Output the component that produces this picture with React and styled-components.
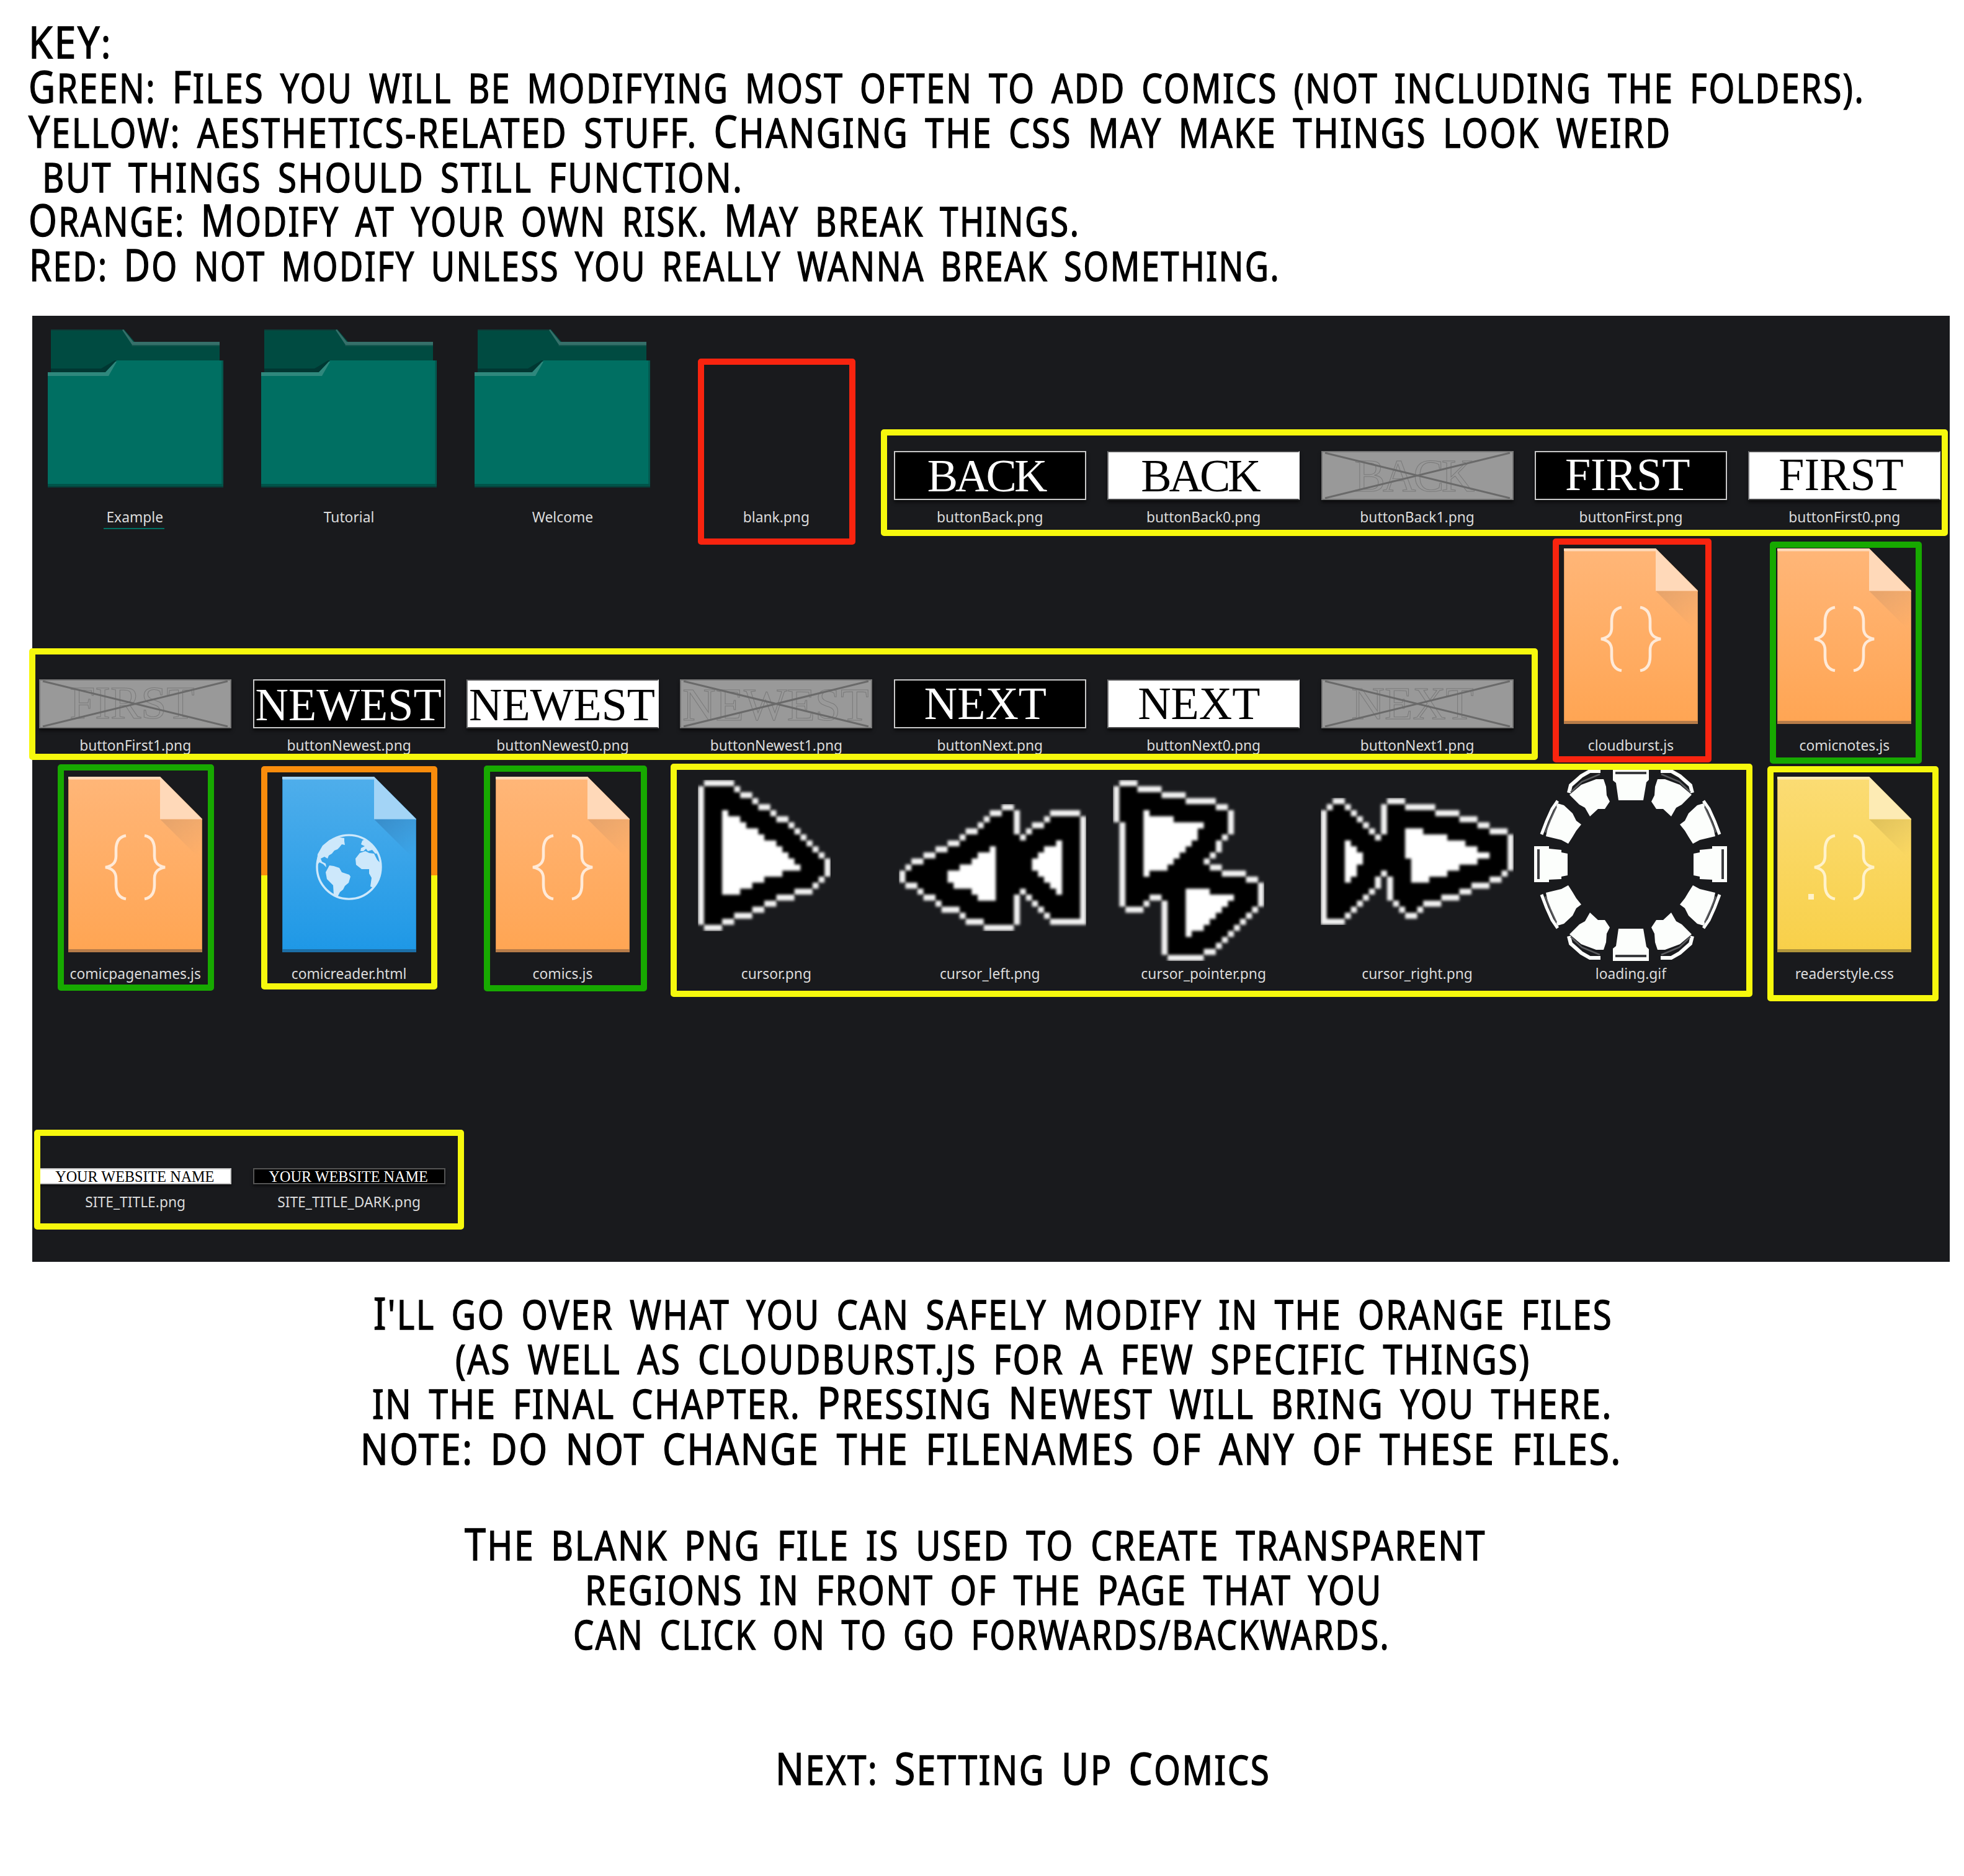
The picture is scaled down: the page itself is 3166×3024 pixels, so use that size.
import React, { useLayoutEffect, useRef, useState } from "react";
import styled, { createGlobalStyle, css } from "styled-components";

const GlobalStyle = createGlobalStyle`
  *, *::before, *::after { box-sizing: border-box; }
  body { margin: 0; background: #fff; }
`;

const Page = styled.main`
  width: 3166px;
  height: 3024px;
  overflow: hidden;
  background: #fff;
  display: flex;
  flex-direction: column;
  color: #000;
  font-family: "Noto Sans", sans-serif;
`;

/* ---------- lettering ---------- */

const Notes = styled.section`
  display: flex;
  flex-direction: column;
  padding-top: ${(p) => p.$top}px;
`;

const NoteLine = styled.div`
  height: 71.8px;
  padding-left: ${(p) => p.$x}px;
  white-space: pre;
  line-height: 71.8px;
  font-size: ${(p) => p.$size || 65}px;
`;

const Lettering = styled.span`
  display: inline-block;
  transform-origin: left center;
  text-transform: uppercase;
  letter-spacing: 3px;
  word-spacing: 11px;
  -webkit-text-stroke: 1.5px #000;
  stroke-linejoin: round;
`;

const Capital = styled.span`
  font-size: 72px;
  line-height: 0;
`;

function Line({ x, end, size, children }) {
  const ref = useRef(null);
  const [scale, setScale] = useState(1);
  const width = end - x;
  useLayoutEffect(() => {
    setScale((width + 8) / ref.current.offsetWidth);
  }, [width]);
  const runs = size ? [children] : children.split(/([A-Z]+)/);
  return (
    <NoteLine $x={x - 4} $size={size}>
      <Lettering ref={ref} style={{ transform: `scaleX(${scale})` }}>
        {runs.map((run, i) => (i % 2 ? <Capital key={i}>{run}</Capital> : run))}
      </Lettering>
    </NoteLine>
  );
}

/* ---------- file browser ---------- */

const BrowserWrap = styled.section`
  position: relative;
  margin: 44px 23px 0 52px;
  height: 1525px;
`;

const Browser = styled.div`
  height: 100%;
  overflow: hidden;
  background: #191a1d;
`;

const FileGrid = styled.div`
  display: grid;
  grid-template-columns: repeat(9, 344.4px);
  grid-auto-rows: 368px;
  margin: -4px 0 0 -6px;
`;

const FileCell = styled.figure`
  margin: 0;
  display: flex;
  flex-direction: column;
  align-items: center;
`;

const Art = styled.div`
  height: 308px;
  flex: none;
  display: flex;
  align-items: flex-end;
  padding-bottom: ${(p) => p.$gap}px;
`;

const FileName = styled.figcaption`
  height: 40px;
  line-height: 42px;
  font-size: 22.8px;
  color: #dcdcdc;
  white-space: nowrap;
  ${(p) =>
    p.$selected &&
    css`
      padding: 0 2px 0 4px;
      margin-left: -4px;
      box-shadow: inset 0 -2px 0 #006f62;
    `}
`;

const tones = {
  dark: css`
    background: #000;
    color: #fff;
    border-color: #c9c9c9;
  `,
  light: css`
    background: #fff;
    color: #000;
    border-color: #4a4a4c #f0f0f0 #4a4a4c #77787a;
  `,
  muted: css`
    background: #999;
    color: #999;
    border-color: #757575;
    -webkit-text-stroke: 1.1px #7c7c7c;
  `,
};

const ButtonImage = styled.div`
  position: relative;
  width: 310px;
  height: 79px;
  padding-left: ${(p) => p.$indent}px;
  border: 2px solid;
  box-shadow: 0 4px 5px rgba(0, 0, 0, 0.55);
  font: 74px/${(p) => p.$leading}px "Liberation Serif", serif;
  letter-spacing: ${(p) => p.$tracking || 0}px;
  white-space: nowrap;
  ${(p) => tones[p.$tone]}
`;

const Cross = styled.svg`
  position: absolute;
  inset: 0;
  width: 100%;
  height: 100%;
`;

const TitleImage = styled.div`
  width: 310px;
  height: 26px;
  padding-left: 24px;
  border: 2px solid;
  box-shadow: 0 3px 4px rgba(0, 0, 0, 0.5);
  font: 24.2px/24px "Liberation Serif", serif;
  white-space: nowrap;
  ${(p) => tones[p.$tone]}
  border-color: ${(p) => (p.$tone === "dark" ? "#555" : "#c4c4c4")};
`;

const Picture = styled.svg`
  display: block;
  width: ${(p) => p.$w}px;
  height: ${(p) => p.$h}px;
  overflow: hidden;
`;

const Highlight = styled.div`
  position: absolute;
  left: ${(p) => p.$box[0] - 52}px;
  top: ${(p) => p.$box[1] - 509}px;
  width: ${(p) => p.$box[2] - p.$box[0]}px;
  height: ${(p) => p.$box[3] - p.$box[1]}px;
  border: 10px solid ${(p) => p.$color};
  border-radius: 5px;
`;

const SplitHighlight = styled(Highlight)`
  border-top-color: #f98c0c;
  border-left-width: 0;
  border-right-width: 0;
  &::before,
  &::after {
    content: "";
    position: absolute;
    top: -6px;
    bottom: -6px;
    width: 10px;
    background: linear-gradient(#f98c0c 172px, ${(p) => p.$color} 172px);
  }
  &::before { left: 0; }
  &::after { right: 0; }
`;

/* ---------- drawings ---------- */

function Folder() {
  return (
    <Picture $w={283} $h={255} viewBox="0 0 283 255">
      <path d="M5 0H123L140 20H277V80H5Z" fill="#004b41" />
      <path d="M5 0H123L124 2H5Z" fill="#0b3c37" />
      <path d="M122 0L138 20H277V25H136L120 1Z" fill="#35706a" />
      <path d="M136 25H277V27H135Z" fill="#14564e" />
      <path d="M5 63H86L108 50H116V70H5Z" fill="#003732" />
      <path d="M0 69H93L111 50H283V255H0Z" fill="#006f62" />
      <path d="M0 69H93L109 52H111L98 75H0Z" fill="#2f887d" />
      <path d="M0 249H283V253H0Z" fill="#005449" />
      <path d="M0 253H283V255H0Z" fill="#093b37" />
      <path d="M281.500 50V253" stroke="#055349" strokeWidth="2" />
    </Picture>
  );
}

const paper = {
  orange: { top: "#ffb678", bottom: "#ffa553", fold: "#ffd9b9", base: "#b77c49", mark: "#ffead8", shade: "#e0a06a" },
  blue: { top: "#4faeeb", bottom: "#1e98e6", fold: "#a3d4f6", base: "#1c6fa7", mark: "#cde8fb", shade: "#3586c2" },
  yellow: { top: "#fbdc74", bottom: "#f8d049", fold: "#fdebb4", base: "#b2963b", mark: "#fff2cb", shade: "#d9bb56" },
};

function Braces({ color, dot }) {
  return (
    <g fill="none" stroke={color} strokeWidth="4.6">
      <path d="M93 95C81 97 77 106 77 118V128C77 139 71 144 60 146C71 148 77 153 77 164V174C77 186 81 195 93 197" />
      <path d="M123 95C135 97 139 106 139 118V128C139 139 145 144 156 146C145 148 139 153 139 164V174C139 186 135 195 123 197" />
      {dot && <rect x="50" y="189" width="9" height="9" fill={color} stroke="none" />}
    </g>
  );
}

function Globe({ color }) {
  return (
    <g fill={color}>
      <circle cx="107.500" cy="145.600" r="51.500" fill="none" stroke={color} strokeWidth="3.400" />
      <path d="M76 102L88 97L100 99V104L101 110L96 109L92 114L89 117L84 119L80 124L75 127L73 132L68 129L62 132L64 137L70 140L71 146L66 141L60 138L56 143L57 125L65 111Z" />
      <path d="M76 143L83 144L92 147L96 154L108 158L110 161L107 171L101 176L98 182L93 186L89 194L83 191L82 175L72 165L70 154Z" />
      <path d="M125 123L134 120L140 123L148 124L153 134L159 140L160 150L156 167L147 179L142 177L144 163L140 156L140 149L128 149L119 142L118 132Z" />
      <path d="M126 120L127 115L133 112L127 109L129 103L134 101L146 110L155 123L150 124L145 118L138 120L135 116L131 120Z" />
    </g>
  );
}

function Document({ tone, mark }) {
  const c = paper[tone];
  return (
    <Picture $w={216} $h={283} viewBox="0 0 216 283">
      <defs>
        <linearGradient id={`page-${tone}`} x1="0" y1="0" x2="0" y2="1">
          <stop offset="0" stopColor={c.top} />
          <stop offset="1" stopColor={c.bottom} />
        </linearGradient>
        <linearGradient id={`shade-${tone}`} gradientUnits="userSpaceOnUse" x1="165" y1="65" x2="210" y2="125">
          <stop offset="0" stopColor={c.shade} stopOpacity=".75" />
          <stop offset="1" stopColor={c.shade} stopOpacity="0" />
        </linearGradient>
      </defs>
      <path d="M0 0H148L216 68V283H0Z" fill={`url(#page-${tone})`} />
      <path d="M0 0H148V4.500H0Z" fill={c.fold} />
      <path d="M148 68.500H216V136Z" fill={`url(#shade-${tone})`} />
      <path d="M148 0L216 68.500H148Z" fill={c.fold} />
      <path d="M0 278H216V283H0Z" fill={c.base} />
      <path d="M.5 4V278M215.500 70V278" stroke={c.base} strokeOpacity=".6" />
      {mark === "globe" ? <Globe color={c.mark} /> : <Braces color={c.mark} dot={mark === "css"} />}
    </Picture>
  );
}

// Cursor sprites are 32x32. outline: [column, row, width, height]; inside: [row, from, to].
const sprites = {
  cursor: {
    outline: [
      [4, 2, 5], [3, 3, 1, 23], [4, 26, 3], [9, 3], [10, 4, 2], [12, 5], [13, 6, 2], [15, 7], [16, 8, 2],
      [18, 9], [19, 10], [20, 11], [21, 12], [22, 13], [23, 14], [24, 15, 1, 3], [23, 18], [22, 19],
      [19, 20, 3], [16, 21, 3], [14, 22, 2], [12, 23, 2], [9, 24, 3], [7, 25, 2],
    ],
    inside: [
      [7, 7, 8], [8, 7, 10], [9, 7, 11], [10, 7, 13], [11, 7, 14], [12, 7, 16], [13, 7, 17], [14, 7, 18],
      [15, 7, 19], [16, 7, 20], [17, 7, 17], [18, 7, 14], [19, 7, 12], [20, 7, 10],
    ],
  },
  left: {
    outline: [
      [18, 6, 2], [20, 7, 1, 4], [21, 11], [22, 10], [23, 9, 2], [25, 8], [26, 7, 5], [31, 8, 1, 17],
      [26, 25, 6], [25, 24], [24, 23], [23, 22], [22, 21], [21, 20], [20, 21, 1, 5], [15, 26, 5],
      [12, 25, 3], [11, 24], [8, 23, 3], [7, 22], [5, 21, 2], [4, 20], [2, 19, 2], [1, 17, 1, 2], [2, 16],
      [3, 15, 2], [5, 14, 2], [7, 13, 2], [9, 12, 2], [11, 11], [12, 10, 2], [14, 9], [15, 8], [16, 7, 2],
    ],
    inside: [
      [13, 16, 17], [14, 14, 17], [15, 13, 17], [16, 11, 17], [17, 9, 17], [18, 9, 17], [19, 10, 17],
      [20, 13, 17], [21, 14, 17], [12, 27, 28], [13, 25, 28], [14, 24, 28], [15, 23, 28], [16, 23, 28],
      [17, 24, 28], [18, 25, 28], [19, 26, 28], [20, 27, 28],
    ],
  },
  pointer: {
    outline: [
      [2, 2, 3], [1, 3, 1, 6], [2, 9, 1, 14], [3, 23, 3], [6, 22], [7, 21, 2], [9, 22, 1, 9], [10, 31, 6],
      [16, 30, 2], [18, 29], [19, 28], [20, 27], [21, 26], [22, 25], [23, 24], [24, 23], [25, 19, 1, 4],
      [23, 18, 2], [19, 17, 4], [17, 16, 2], [16, 15], [17, 14], [18, 12, 1, 2], [19, 11], [20, 7, 1, 4],
      [18, 6, 2], [13, 5, 5], [9, 4, 4], [5, 3, 4],
    ],
    inside: [
      [7, 6, 7], [8, 6, 11], [9, 6, 16], [10, 6, 15], [11, 6, 15], [12, 6, 14], [13, 6, 13], [14, 6, 12],
      [15, 6, 11], [16, 6, 10], [17, 6, 7], [20, 13, 17], [21, 13, 21], [22, 13, 20], [23, 13, 19],
      [24, 13, 18], [25, 13, 17], [26, 13, 16], [27, 13, 14],
    ],
  },
  right: {
    outline: [
      [0, 7, 1, 18], [0, 25, 4], [1, 6], [2, 5, 2], [4, 6], [5, 7], [6, 8], [7, 9], [8, 10], [9, 11],
      [10, 6, 1, 5], [11, 5, 3], [14, 6, 5], [19, 7, 4], [23, 8, 3], [26, 9, 2], [28, 10, 3],
      [31, 11, 1, 6], [30, 17], [28, 18, 2], [25, 19, 3], [23, 20, 2], [20, 21, 3], [17, 22, 3], [16, 23],
      [14, 24, 2], [13, 23], [12, 22], [11, 18, 1, 4], [10, 17], [9, 18, 1, 2], [8, 20], [7, 21], [6, 22],
      [5, 23], [4, 24],
    ],
    inside: [
      [12, 4, 5], [13, 4, 6], [14, 4, 7], [15, 4, 7], [16, 4, 6], [17, 4, 6], [18, 4, 5], [10, 14, 17],
      [11, 14, 21], [12, 14, 24], [13, 14, 26], [14, 14, 28], [15, 15, 26], [16, 15, 23], [17, 15, 21],
      [18, 15, 18],
    ],
  },
};

// Everything the outline encloses is the black body of the sprite.
function bodyPath(outline) {
  const grid = Array.from({ length: 34 }, () => Array(34).fill(0));
  outline.forEach(([c, r, w = 1, h = 1]) => {
    for (let y = r; y < r + h; y++) for (let x = c; x < c + w; x++) grid[y + 1][x + 1] = 1;
  });
  const queue = [[0, 0]];
  while (queue.length) {
    const [x, y] = queue.pop();
    if (x < 0 || y < 0 || x > 33 || y > 33 || grid[y][x]) continue;
    grid[y][x] = 2;
    queue.push([x + 1, y], [x - 1, y], [x, y + 1], [x, y - 1]);
  }
  let d = "";
  grid.forEach((row, y) =>
    row.forEach((cell, x) => {
      if (cell === 0) d += `M${x - 1.3} ${y - 1.3}h1.6v1.6h-1.6z`;
    })
  );
  return d;
}

function Sprite({ name }) {
  const { outline, inside } = sprites[name];
  const line = outline.map(([c, r, w = 1, h = 1]) => `M${c} ${r}h${w}v${h}h${-w}z`).join("");
  const fill = inside.map(([r, a, b]) => `M${a} ${r}h${b - a}v1.020h${a - b}z`).join("");
  return (
    <Picture $w={311} $h={311} viewBox="0 0 32 32">
      <defs>
        <filter id={`soft-${name}`} x="0" y="0" width="1" height="1">
          <feGaussianBlur stdDeviation=".2" />
        </filter>
      </defs>
      <path d={bodyPath(outline)} fill="#000" />
      <g filter={`url(#soft-${name})`} fill="#fff">
        <path d={line} fill="#f2f2f2" />
        <path d={fill} />
      </g>
    </Picture>
  );
}

function RingQuarter() {
  return (
    <g>
      <path d="M57 43L76 27L100 18L112 18L116 30L117 44L122 54L114 66L103 66L90 78L82 64L73 59Z" />
      <path d="M56 40L59 28L76 13L90 5L107 5" fill="none" stroke="#fcfefc" strokeWidth="6" />
      <path d="M38 57L48 60L62 73L68 85L76 91L68 101L62 111L55 122L44 116L19 110L22 96L28 78Z" />
      <path d="M38 53L29 66L20 86L12 107" fill="none" stroke="#fcfefc" strokeWidth="5" />
      <path d="M59 39L77 22L106 10M36 62L26 84L18 104" fill="none" stroke="#5a5b5e" strokeWidth="2.500" />
    </g>
  );
}

function Loading() {
  return (
    <Picture $w={311} $h={311} viewBox="0 0 311 311">
      <g fill="#fcfefc">
        <RingQuarter />
        <g transform="translate(311 0) scale(-1 1)"><RingQuarter /></g>
        <g transform="translate(0 311) scale(1 -1)"><RingQuarter /></g>
        <g transform="translate(311 311) scale(-1 -1)"><RingQuarter /></g>
        <path d="M127 0H185V19L181 23L176 52H136L132 24L127 20Z" />
        <path d="M127 311H185V292L181 288L176 259H136L132 287L127 291Z" />
        <path d="M0 126H24V130L44 132V136L54 138V173L44 175V179L24 180V184H0Z" />
        <path d="M311 126H287V130L267 132V136L257 138V173L267 175V179L287 180V184H311Z" />
      </g>
      <g stroke="#3a3b3f" strokeWidth="4">
        <path d="M131 8H181M131 303H181M7 131V179M304 131V179" />
      </g>
    </Picture>
  );
}

function ButtonArt({ label, tone, indent, leading, tracking }) {
  return (
    <ButtonImage $tone={tone} $indent={indent} $leading={leading} $tracking={tracking}>
      {label}
      {tone === "muted" && (
        <Cross viewBox="0 0 306 75" preserveAspectRatio="none">
          <path d="M4 1L302 74M4 74L302 1" stroke="#6a6a6a" strokeWidth="3" />
        </Cross>
      )}
    </ButtonImage>
  );
}

const words = {
  back: { label: "BACK", indent: 52, leading: 76, tracking: -4 },
  first: { label: "FIRST", indent: 47, leading: 72 },
  newest: { label: "NEWEST", indent: 2, leading: 78 },
  next: { label: "NEXT", indent: 47, leading: 75 },
};

const button = (word, tone) => ({ gap: 7, art: <ButtonArt {...words[word]} tone={tone} /> });
const folder = { gap: 27, art: <Folder /> };
const doc = (tone, mark) => ({ gap: 14, art: <Document tone={tone} mark={mark} /> });
const sprite = (name) => ({ gap: 0, art: <Sprite name={name} /> });

const files = [
  { name: "Example", selected: true, ...folder },
  { name: "Tutorial", ...folder },
  { name: "Welcome", ...folder },
  { name: "blank.png", gap: 0, art: null },
  { name: "buttonBack.png", ...button("back", "dark") },
  { name: "buttonBack0.png", ...button("back", "light") },
  { name: "buttonBack1.png", ...button("back", "muted") },
  { name: "buttonFirst.png", ...button("first", "dark") },
  { name: "buttonFirst0.png", ...button("first", "light") },
  { name: "buttonFirst1.png", ...button("first", "muted") },
  { name: "buttonNewest.png", ...button("newest", "dark") },
  { name: "buttonNewest0.png", ...button("newest", "light") },
  { name: "buttonNewest1.png", ...button("newest", "muted") },
  { name: "buttonNext.png", ...button("next", "dark") },
  { name: "buttonNext0.png", ...button("next", "light") },
  { name: "buttonNext1.png", ...button("next", "muted") },
  { name: "cloudburst.js", ...doc("orange") },
  { name: "comicnotes.js", ...doc("orange") },
  { name: "comicpagenames.js", ...doc("orange") },
  { name: "comicreader.html", ...doc("blue", "globe") },
  { name: "comics.js", ...doc("orange") },
  { name: "cursor.png", ...sprite("cursor") },
  { name: "cursor_left.png", ...sprite("left") },
  { name: "cursor_pointer.png", ...sprite("pointer") },
  { name: "cursor_right.png", ...sprite("right") },
  { name: "loading.gif", gap: 0, art: <Loading /> },
  { name: "readerstyle.css", ...doc("yellow", "css") },
  { name: "SITE_TITLE.png", gap: 8, art: <TitleImage $tone="light">YOUR WEBSITE NAME</TitleImage> },
  { name: "SITE_TITLE_DARK.png", gap: 8, art: <TitleImage $tone="dark">YOUR WEBSITE NAME</TitleImage> },
];

const RED = "#f8240f";
const YELLOW = "#f6f80d";
const GREEN = "#17a900";

const highlights = [
  { color: RED, box: [1125, 578, 1379, 878] },
  { color: YELLOW, box: [1420, 692, 3140, 864] },
  { color: YELLOW, box: [47, 1045, 2479, 1225] },
  { color: RED, box: [2503, 868, 2759, 1229] },
  { color: GREEN, box: [2853, 873, 3098, 1231] },
  { color: GREEN, box: [93, 1232, 345, 1597] },
  { color: GREEN, box: [780, 1234, 1043, 1598] },
  { color: YELLOW, box: [1081, 1231, 2825, 1607] },
  { color: YELLOW, box: [2849, 1235, 3125, 1614] },
  { color: YELLOW, box: [55, 1821, 748, 1982] },
];

export default function App() {
  return (
    <Page>
      <GlobalStyle />
      <Notes $top={34.2}>
        <Line x={50} end={177}>KEY:</Line>
        <Line x={50} end={3002}>Green: Files you will be modifying most often to add comics (not including the folders).</Line>
        <Line x={50} end={2691}>Yellow: aesthetics-related stuff. Changing the css may make things look weird</Line>
        <Line x={72} end={1194}>but things should still function.</Line>
        <Line x={50} end={1737}>Orange: Modify at your own risk. May break things.</Line>
        <Line x={51} end={2060}>Red: Do not modify unless you really wanna break something.</Line>
      </Notes>

      <BrowserWrap>
        <Browser>
          <FileGrid>
            {files.map((file) => (
              <FileCell key={file.name}>
                <Art $gap={file.gap}>{file.art}</Art>
                <FileName $selected={file.selected}>{file.name}</FileName>
              </FileCell>
            ))}
          </FileGrid>
        </Browser>
        {highlights.map((h) => (
          <Highlight key={h.box.join()} $color={h.color} $box={h.box} />
        ))}
        <SplitHighlight $color={YELLOW} $box={[421, 1235, 705, 1595]} />
      </BrowserWrap>

      <Notes $top={49.5}>
        <Line x={606} end={2596}>I'll go over what you can safely modify in the orange files</Line>
        <Line x={738} end={2464}>(as well as cloudburst.js for a few specific things)</Line>
        <Line x={604} end={2596}>in the final chapter. Pressing Newest will bring you there.</Line>
        <Line x={585} end={2611} size={69}>NOTE: DO NOT CHANGE THE FILENAMES OF ANY OF THESE FILES.</Line>
      </Notes>
      <Notes $top={84.5}>
        <Line x={753} end={2392}>The blank png file is used to create transparent</Line>
        <Line x={947} end={2225}>regions in front of the page that you</Line>
        <Line x={928} end={2237}>can click on to go forwards/backwards.</Line>
      </Notes>
      <Notes $top={146.5}>
        <Line x={1254} end={2044}>Next: Setting Up Comics</Line>
      </Notes>
    </Page>
  );
}
